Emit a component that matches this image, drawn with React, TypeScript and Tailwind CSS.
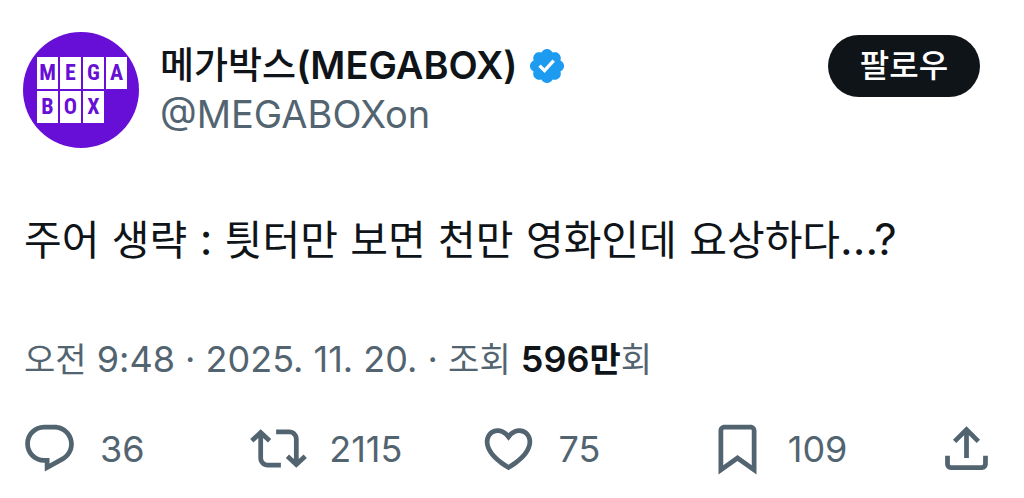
import type { ReactNode } from "react";

const paths = {
  reply:
    "M1.751 10c0-4.42 3.584-8 8.005-8h4.366c4.49 0 8.129 3.64 8.129 8.13 0 2.96-1.607 5.68-4.196 7.11l-8.054 4.46v-3.69h-.067c-4.49.1-8.183-3.51-8.183-8.01zm8.005-6c-3.317 0-6.005 2.69-6.005 6 0 3.37 2.77 6.08 6.138 6.01l.351-.01h1.761v2.3l5.087-2.81c1.951-1.08 3.163-3.13 3.163-5.36 0-3.39-2.744-6.13-6.129-6.13H9.756z",
  repost:
    "M4.5 3.88l4.432 4.14-1.364 1.46L5.5 7.55V16c0 1.1.896 2 2 2H13v2H7.5c-2.209 0-4-1.79-4-4V7.55L1.432 9.48.068 8.02 4.5 3.88zM16.5 6H11V4h5.5c2.209 0 4 1.79 4 4v8.45l2.068-1.93 1.364 1.46-4.432 4.14-4.432-4.14 1.364-1.46 2.068 1.93V8c0-1.1-.896-2-2-2z",
  like:
    "M16.697 5.5c-1.222-.06-2.679.51-3.89 2.16l-.805 1.09-.806-1.09C9.984 6.01 8.526 5.44 7.304 5.5c-1.243.07-2.349.78-2.91 1.91-.552 1.12-.633 2.78.479 4.82 1.074 1.97 3.257 4.27 7.129 6.61 3.87-2.34 6.052-4.64 7.126-6.61 1.111-2.04 1.03-3.7.477-4.82-.561-1.13-1.666-1.84-2.908-1.91zm4.187 7.69c-1.351 2.48-4.001 5.12-8.379 7.67l-.503.3-.504-.3c-4.379-2.55-7.029-5.19-8.382-7.67-1.36-2.5-1.41-4.86-.514-6.67.887-1.79 2.647-2.91 4.601-3.01 1.651-.09 3.368.56 4.798 2.01 1.429-1.45 3.146-2.1 4.796-2.01 1.954.1 3.714 1.22 4.601 3.01.896 1.81.846 4.17-.514 6.67z",
  bookmark:
    "M4 4.5C4 3.12 5.119 2 6.5 2h11C18.881 2 20 3.12 20 4.5v18.44l-8-5.71-8 5.71V4.5zM6.5 4c-.276 0-.5.22-.5.5v14.56l6-4.29 6 4.29V4.5c0-.28-.224-.5-.5-.5h-11z",
  share:
    "M12 2.59l5.7 5.7-1.41 1.42L13 6.41V16h-2V6.41l-3.3 3.3-1.41-1.42L12 2.59zM21 15l-.02 3.51c0 1.38-1.12 2.49-2.5 2.49H5.5C4.11 21 3 19.88 3 18.5V15h2v3.5c0 .28.22.5.5.5h12.98c.28 0 .5-.22.5-.5L19 15h2z",
  verified:
    "M20.396 11c-.018-.646-.215-1.275-.57-1.816-.354-.54-.852-.972-1.438-1.246.223-.607.27-1.264.14-1.897-.131-.634-.437-1.218-.882-1.687-.47-.445-1.053-.75-1.687-.882-.633-.13-1.29-.083-1.897.14-.273-.587-.704-1.086-1.245-1.44S11.647 1.62 11 1.604c-.646.017-1.273.213-1.813.568s-.969.854-1.24 1.44c-.608-.223-1.267-.272-1.902-.14-.635.13-1.22.436-1.69.882-.445.47-.749 1.055-.878 1.688-.13.633-.08 1.29.144 1.896-.587.274-1.087.705-1.443 1.245-.356.54-.555 1.17-.574 1.817.02.647.218 1.276.574 1.817.356.54.856.972 1.443 1.245-.224.606-.274 1.263-.144 1.896.13.634.433 1.218.877 1.688.47.443 1.054.747 1.687.878.633.132 1.29.084 1.897-.136.274.586.705 1.084 1.246 1.439.54.354 1.17.551 1.816.569.647-.016 1.276-.213 1.817-.567s.972-.854 1.245-1.44c.604.239 1.266.296 1.903.164.636-.132 1.22-.447 1.68-.907.46-.46.776-1.044.908-1.681s.075-1.299-.165-1.903c.586-.274 1.084-.705 1.439-1.246.354-.54.551-1.17.569-1.816zM9.662 14.85l-3.429-3.428 1.293-1.302 2.072 2.072 4.4-4.794 1.347 1.246z",
};

function Icon({ d }: { d: string }) {
  return (
    <svg viewBox="0 0 24 24" className="size-[57px] shrink-0 fill-current" aria-hidden="true">
      <path d={d} />
    </svg>
  );
}

function Action({ label, d, children }: { label: string; d: string; children: ReactNode }) {
  return (
    <div className="flex-1">
      <button type="button" aria-label={label} className="flex items-center gap-[22px]">
        <Icon d={d} />
        <span>{children}</span>
      </button>
    </div>
  );
}

/* Hangul runs are set slightly smaller than the Latin text beside them. */
function Mixed({ text, hangul }: { text: string; hangul: string }) {
  return (
    <>
      {text.split(/([가-힣]+)/).map((part, i) =>
        i % 2 === 1 ? (
          <span key={i} className={hangul}>
            {part}
          </span>
        ) : (
          part
        ),
      )}
    </>
  );
}

function Avatar() {
  return (
    <div className="flex size-[116px] shrink-0 flex-col gap-[2px] rounded-full bg-[#670fd6] pt-[25px] pl-[14px] font-['Liberation_Sans_Narrow','Roboto_Condensed','DejaVu_Sans_Condensed',sans-serif] text-[22px] leading-none font-bold text-[#670fd6]">
      {["MEGA", "BOX"].map((row) => (
        <div key={row} className="flex gap-[2px]">
          {row.split("").map((letter) => (
            <span key={letter} className="flex h-8 w-[21px] items-center justify-center bg-white">
              {letter}
            </span>
          ))}
        </div>
      ))}
    </div>
  );
}

export default function App() {
  return (
    <article
      lang="ko"
      className="min-h-screen bg-white px-6 pt-8 font-['Inter','Noto_Sans_CJK_KR',sans-serif] text-[#0f1419]"
    >
      <header className="-ml-px flex items-start">
        <Avatar />
        <div className="ml-[21px] min-w-0 flex-1 pt-[9px]">
          <div className="flex items-center gap-[10px]">
            <h1 className="text-[38px] leading-[48px] font-semibold whitespace-nowrap">
              <Mixed text="메가박스(MEGABOX)" hangul="text-[37px] font-medium" />
            </h1>
            <svg viewBox="0 0 22 22" className="size-10 shrink-0 fill-[#1d9bf0]" role="img" aria-label="인증된 계정">
              <path d={paths.verified} />
            </svg>
          </div>
          <p className="text-[38px] leading-[48px] text-[#536471]">@MEGABOXon</p>
        </div>
        <button
          type="button"
          className="mt-[3px] mr-5 h-[62px] w-[152px] shrink-0 rounded-full bg-[#0f1419] text-[32px] leading-none font-medium text-white"
        >
          팔로우
        </button>
      </header>

      <p className="mt-[61px] text-[44px] leading-[60px]">
        <Mixed text="주어 생략 : 틧터만 보면 천만 영화인데 요상하다...?" hangul="text-[41px]" />
      </p>

      <p className="mt-[65px] text-[36px] leading-[48px] text-[#536471]">
        <time dateTime="2025-11-20T09:48">
          <Mixed text="오전 9:48 · 2025. 11. 20." hangul="text-[34px]" />
        </time>
        <Mixed text=" · 조회 " hangul="text-[34px]" />
        <strong className="font-semibold text-[#0f1419]">
          <Mixed text="596만" hangul="text-[34px]" />
        </strong>
        <Mixed text="회" hangul="text-[34px]" />
      </p>

      <div className="mt-9 mr-[5px] -ml-[3px] flex items-center text-[36px] leading-[48px] text-[#536471]">
        <Action label="답글" d={paths.reply}>36</Action>
        <Action label="재게시" d={paths.repost}>2115</Action>
        <Action label="마음에 들어요" d={paths.like}>75</Action>
        <Action label="북마크" d={paths.bookmark}>109</Action>
        <button type="button" aria-label="공유">
          <Icon d={paths.share} />
        </button>
      </div>
    </article>
  );
}
